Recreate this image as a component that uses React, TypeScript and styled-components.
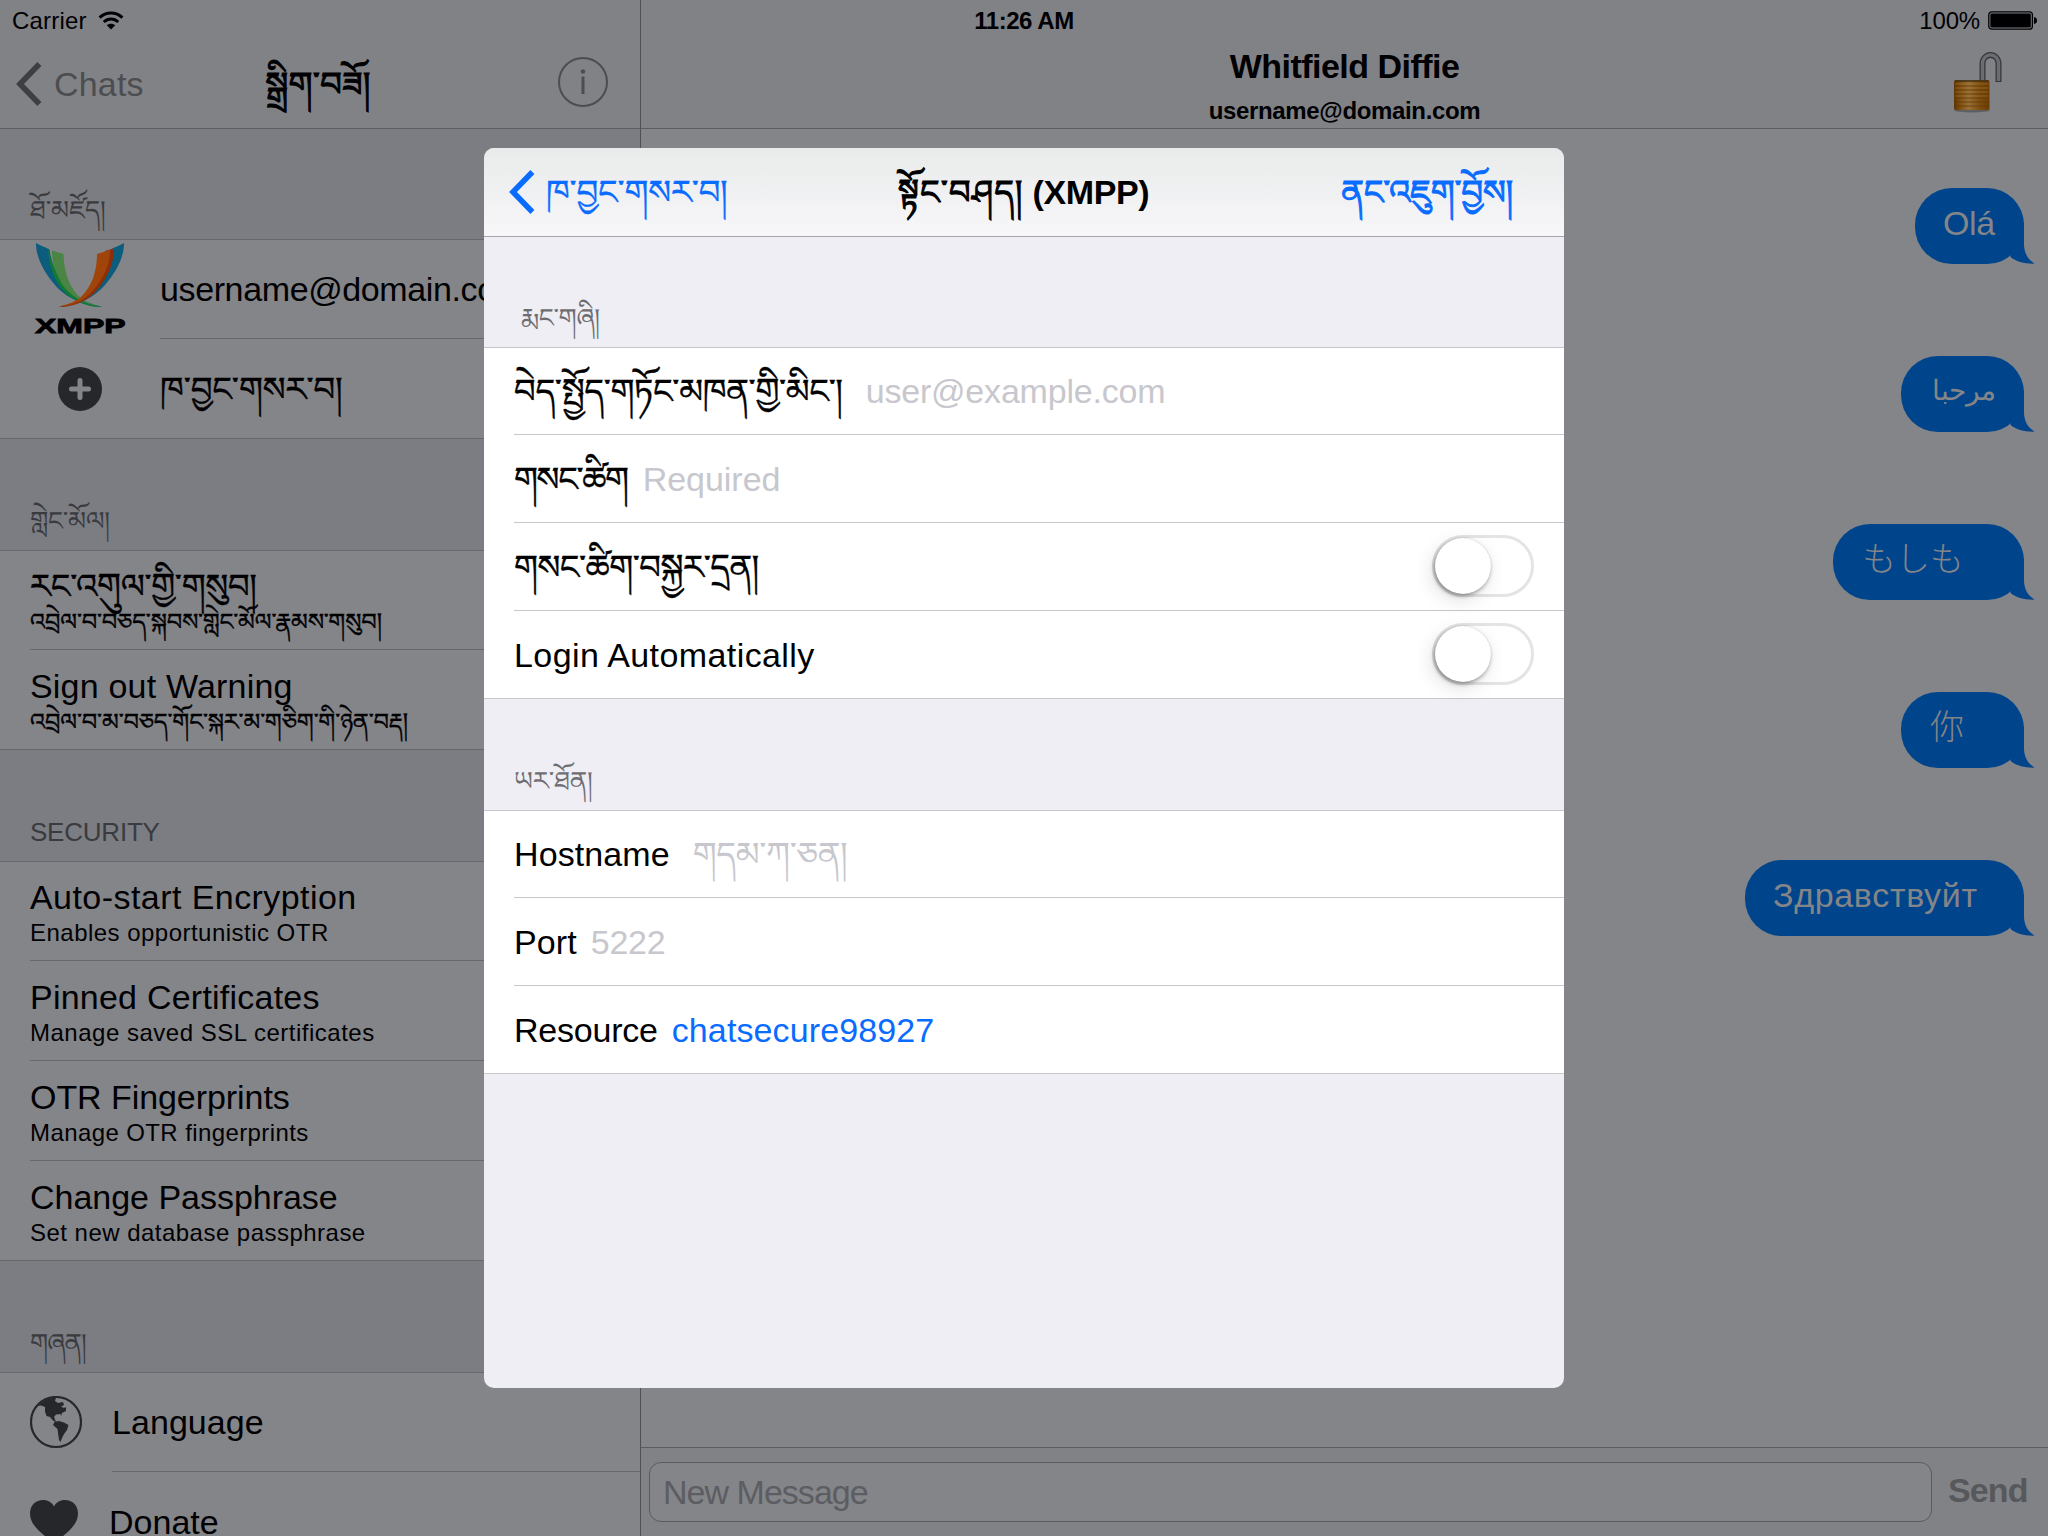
import React, { useLayoutEffect, useRef, useState } from "react";
import styled, { createGlobalStyle } from "styled-components";

const GlobalStyle = createGlobalStyle`
  html, body { margin: 0; padding: 0; }
  body { width: 2048px; height: 1536px; overflow: hidden; background: #848588; }
  *, *::before, *::after { box-sizing: border-box; }
`;

const FONT = `"Liberation Sans", "Noto Sans Tibetan", "Noto Serif Tibetan", "Noto Sans CJK JP", sans-serif`;

/* ---------- text fitted to a given advance width ---------- */

const FitBox = styled.span`
  display: inline-block;
  white-space: pre;

  &:lang(bo) {
    -webkit-text-stroke: 0.4px currentColor;
  }
`;

const SIDE_BEARING = 1.3;

function Fit({ w, lang, children }: { w: number; lang?: string; children: string }) {
  const ref = useRef<HTMLSpanElement>(null);
  const [spacing, setSpacing] = useState(0);
  useLayoutEffect(() => {
    const el = ref.current;
    if (!el) return;
    el.style.letterSpacing = "0px";
    const base = el.getBoundingClientRect().width;
    el.style.letterSpacing = "1px";
    const slope = el.getBoundingClientRect().width - base;
    const next = slope > 0 ? (w - SIDE_BEARING - base) / slope : 0;
    el.style.letterSpacing = `${next}px`;
    setSpacing(next);
  }, [w, children]);
  return (
    <FitBox ref={ref} lang={lang} style={{ letterSpacing: `${spacing}px` }}>
      {children}
    </FitBox>
  );
}

/* ---------- screen ---------- */

const Screen = styled.div`
  position: relative;
  display: flex;
  flex-direction: row;
  width: 2048px;
  height: 1536px;
  overflow: hidden;
  font-family: ${FONT};
  font-size: 34px;
  color: #000003;
  background: #848588;
`;

const Sidebar = styled.aside`
  display: flex;
  flex-direction: column;
  width: 641px;
  border-right: 1px solid #4f5053;
`;

const Chat = styled.main`
  display: flex;
  flex-direction: column;
  flex: 1;
`;

const TopBar = styled.header`
  display: flex;
  flex-direction: column;
  height: 129px;
  background: #818286;
  border-bottom: 1px solid #5c5d61;
`;

const StatusRow = styled.div<{ $end?: boolean }>`
  display: flex;
  align-items: center;
  justify-content: ${(p) => (p.$end ? "flex-end" : "flex-start")};
  gap: ${(p) => (p.$end ? 8 : 11)}px;
  height: 40px;
  padding: 1px 11px 0 12px;
  font-size: 24px;
  line-height: 30px;
`;

const NavRow = styled.div`
  display: grid;
  grid-template-columns: 1fr auto 1fr;
  align-items: center;
  height: 88px;
  padding: 0 32px 0 16px;
  line-height: 40px;
`;

const BackLabel = styled.div`
  display: flex;
  align-items: center;
  gap: 12px;
  color: #4c4d50;
  svg { color: #3e3f42; }
`;

const NavTitle = styled.h1<{ $shift: number }>`
  margin: 0;
  padding-left: ${(p) => p.$shift}px;
  font-size: 34px;
  line-height: 40px;
  font-weight: 700;
  white-space: pre;

  span:lang(bo) {
    font-weight: 400;
    -webkit-text-stroke: 1px currentColor;
  }
`;

const NavEnd = styled.div`
  display: flex;
  justify-content: flex-end;
  align-items: center;
  padding-bottom: 4px;
  color: #4c4d50;
`;

/* ---------- sidebar list ---------- */

const GroupHeader = styled.h2<{ $h: number; $inset?: number; $color?: string }>`
  display: flex;
  align-items: flex-end;
  height: ${(p) => p.$h}px;
  margin: 0;
  padding: 0 0 14px ${(p) => p.$inset ?? 30}px;
  font-size: 26px;
  font-weight: 400;
  line-height: 30px;
  color: ${(p) => p.$color || "#3a3b3f"};
`;

const SideGroups = styled.div`
  flex: 1;
  overflow: hidden;
  background: #7c7d82;
`;

const Group = styled.section`
  background: #848588;
  border-top: 1px solid #67686c;
`;

const SideRow = styled.div<{ $first?: boolean; $last?: boolean }>`
  display: flex;
  height: ${(p) => (p.$first ? 99 : 100)}px;
  ${(p) => (p.$last ? "border-bottom: 1px solid #67686c;" : "")}
`;

const Lead = styled.div<{ $w: number; $pad: number; $top?: boolean }>`
  display: flex;
  align-items: ${(p) => (p.$top ? "flex-start" : "center")};
  flex: none;
  width: ${(p) => p.$w}px;
  padding-left: ${(p) => p.$pad}px;
  padding-top: ${(p) => (p.$top ? 3 : 0)}px;
  color: #26272b;
`;

const RowBody = styled.div<{ $line?: boolean; $two?: boolean }>`
  display: flex;
  flex-direction: column;
  justify-content: center;
  flex: 1;
  padding-top: ${(p) => (p.$two ? 4 : 0)}px;
  line-height: 40px;
  white-space: nowrap;
  ${(p) => (p.$line ? "border-bottom: 1px solid #67686c;" : "")}
`;

const Subtitle = styled.div`
  font-size: 24px;
  line-height: 32px;
`;

/* ---------- chat ---------- */

const ChatTitle = styled.div`
  display: grid;
  grid-template-columns: 1fr auto 1fr;
  height: 88px;
  padding-right: 43px;
  font-weight: 700;
`;

const ChatNames = styled.div`
  display: flex;
  flex-direction: column;
  align-items: center;
  padding-left: 43px;
  padding-top: 6px;
  line-height: 40px;
`;

const ChatUser = styled.div`
  font-size: 24px;
  line-height: 30px;
  padding-top: 10px;
`;

const LockSlot = styled.div`
  display: flex;
  justify-content: flex-end;
  padding: 11px 3px 0 0;
`;

const Messages = styled.div`
  display: flex;
  flex-direction: column;
  align-items: flex-end;
  gap: 92px;
  flex: 1;
  padding: 59px 24px 0 0;
`;

const Bubble = styled.div<{ $w: number; $pad: number }>`
  position: relative;
  width: ${(p) => p.$w}px;
  height: 76px;
  padding: 15px 0 0 ${(p) => p.$pad}px;
  border-radius: 37px;
  background: #00448b;
  color: #848588;
  line-height: 40px;
  white-space: nowrap;

  &:lang(ja), &:lang(zh) {
    font-weight: 300;
  }
`;

const ArabicText = styled.span`
  display: block;
  width: 64px;
  font-size: 28px;
`;

const Tail = styled.svg`
  position: absolute;
  right: -11px;
  bottom: 0;
  display: block;
`;

const Composer = styled.div`
  display: flex;
  align-items: flex-start;
  height: 89px;
  padding: 14px 0 0 8px;
  border-top: 1px solid #5c5d61;
  background: #818286;
`;

const Input = styled.div`
  display: flex;
  align-items: center;
  width: 1283px;
  height: 60px;
  padding-left: 13px;
  border: 1px solid #5a5b5f;
  border-radius: 12px;
  background: #848588;
  color: #5c5d62;
  line-height: 40px;
`;

const Send = styled.div`
  padding: 8px 0 0 16px;
  line-height: 40px;
  font-weight: 700;
  color: #57585b;
`;

/* ---------- modal ---------- */

const Clock = styled.div`
  position: absolute;
  top: 6px;
  left: 0;
  width: 2048px;
  text-align: center;
  font-size: 24px;
  line-height: 30px;
  font-weight: 700;
`;

const Modal = styled.div`
  position: absolute;
  left: 484px;
  top: 148px;
  display: flex;
  flex-direction: column;
  width: 1080px;
  height: 1240px;
  border-radius: 10px;
  overflow: hidden;
  background: #efeef4;
  color: #000;
`;

const ModalNav = styled.header`
  display: grid;
  grid-template-columns: 1fr auto 1fr;
  align-items: center;
  height: 89px;
  padding: 0 51px 0 25px;
  background: linear-gradient(#e9eaea, #f7f7f9);
  border-bottom: 1px solid #a5a6a9;
  line-height: 40px;
`;

const ModalLink = styled.div<{ $end?: boolean }>`
  display: flex;
  align-items: center;
  justify-content: ${(p) => (p.$end ? "flex-end" : "flex-start")};
  gap: 11px;
  color: #0a6cff;

  span:lang(bo) {
    -webkit-text-stroke: ${(p) => (p.$end ? 1 : 0.3)}px currentColor;
  }
`;

const Card = styled.section`
  padding-left: 30px;
  background: #fff;
  border-top: 1px solid #c8c7cc;
  border-bottom: 1px solid #c8c7cc;
`;

const Field = styled.div<{ $edge?: boolean; $last?: boolean; $gap?: number }>`
  display: flex;
  align-items: center;
  gap: ${(p) => p.$gap ?? 15}px;
  height: ${(p) => (p.$edge || p.$last ? 87 : 88)}px;
  padding-right: 30px;
  line-height: 40px;
  white-space: nowrap;
  ${(p) => (p.$last ? "" : "border-bottom: 1px solid #c8c7cc;")}
`;

const Placeholder = styled.span`
  color: #c7c7cd;
`;

const Value = styled.span`
  color: #0a6cff;
`;

const Spacer = styled.span`
  flex: 1;
`;

const Track = styled.span`
  width: 102px;
  height: 62px;
  margin-bottom: 1px;
  border: 3px solid #e4e4e4;
  border-radius: 31px;
`;

const Knob = styled.span`
  display: block;
  width: 56px;
  height: 56px;
  border-radius: 50%;
  background: #fff;
  box-shadow: 0 0 1px rgba(0, 0, 0, 0.18), -1px 2px 4px rgba(0, 0, 0, 0.36), -3px 6px 20px rgba(0, 0, 0, 0.12);
`;

/* ---------- drawings ---------- */

const Wifi = () => (
  <svg width="26" height="19" viewBox="0 0 26 19" fill="none" stroke="currentColor">
    <path d="M1.6 6.6C8 .4 18 .4 24.4 6.6" strokeWidth="3" />
    <path d="M5.8 11C10 7 16 7 20.2 11" strokeWidth="3" />
    <path d="M13 18.5L8.8 14.2C11.2 12.2 14.8 12.2 17.2 14.2Z" fill="currentColor" stroke="none" />
  </svg>
);

const Chevron = () => (
  <svg width="26" height="44" viewBox="0 0 26 44" fill="none" stroke="currentColor" strokeWidth="5.6">
    <path d="M23.4 2L4 22L23.4 42" />
  </svg>
);

const Info = () => (
  <svg width="50" height="50" viewBox="0 0 50 50" fill="none" stroke="currentColor">
    <circle cx="25" cy="25" r="24" strokeWidth="2" />
    <path d="M25 19.5V37" strokeWidth="3" />
    <circle cx="25" cy="14.5" r="2.2" fill="currentColor" stroke="none" />
  </svg>
);

const Battery = () => (
  <svg width="49" height="20" viewBox="0 0 49 20">
    <rect x="0.8" y="0.8" width="43.6" height="17.4" rx="3" fill="none" stroke="#000003" strokeWidth="1.3" />
    <rect x="2.4" y="2.4" width="40.4" height="14.2" rx="1.4" fill="#000003" />
    <path d="M46 6c2 .3 3 1.500 3 3.500s-1 3.200-3 3.500z" fill="#000003" />
  </svg>
);

const Lock = () => (
  <svg width="50" height="62" viewBox="0 0 50 62">
    <defs>
      <linearGradient id="brass" x1="0" x2="1">
        <stop offset="0" stopColor="#5e3505" />
        <stop offset=".15" stopColor="#7d4c0c" />
        <stop offset=".42" stopColor="#997038" />
        <stop offset=".7" stopColor="#7f500f" />
        <stop offset="1" stopColor="#6c3d04" />
      </linearGradient>
    </defs>
    <ellipse cx="20" cy="59" rx="18" ry="2.500" fill="#5e5f62" />
    <path d="M30.500 32V12.500a8 8.600 0 0 1 16 0V31" fill="none" stroke="#37383d" strokeWidth="6" />
    <path d="M30.500 32V12.500a8 8.600 0 0 1 16 0V30" fill="none" stroke="#6c6d72" strokeWidth="3.400" />
    <rect x="2" y="29" width="35.500" height="30" rx="2" fill="url(#brass)" />
    <path d="M3 30h33.500" stroke="#3e3118" strokeWidth="1.500" />
    <path d="M3 35h33.500M3 39h33.500M3 43h33.500M3 47h33.500M3 51h33.500M3 55h33.500" stroke="#61380a" strokeWidth="1.200" opacity=".75" />
    <path d="M3 33h33.500M3 37h33.500M3 41h33.500M3 45h33.500" stroke="#a87a2c" strokeWidth="1" opacity=".45" />
  </svg>
);

const LogoBox = styled.div`
  display: flex;
  flex-direction: column;
  align-items: center;
  gap: 6px;
  width: 92px;
`;

const LogoWord = styled.div`
  height: 22px;
  font-size: 20px;
  line-height: 22px;
  font-weight: 700;
  color: #000003;
  transform: scaleX(1.6);
  -webkit-text-stroke: 0.8px #000003;
`;

const XmppLogo = () => (
  <LogoBox>
    <svg width="90" height="66" viewBox="0 0 90 66">
      <path d="M1 0C6 3 12 5 14.500 6.500C17 28 30 46 45 56C50 59 58 61 67 64C50 64 30 54 20 42C8 28 1 14 1 0Z" fill="#0b5c7d" />
      <path d="M13.500 6C18 30 30 48 44 57C50 60.500 59 62 67 64C52 65 34 56 26 45C18 34 13 20 13.500 6Z" fill="#117a33" />
      <path d="M17 7.500L28.500 11C29 32 36 47 46 55C52 60 60 62 65 63.500C48 61 34 52 27 41C20 29 17 20 17 7.500Z" fill="#4a8545" />
      <path d="M89 0C84 3 78 5 75.500 6.500C73 28 60 46 48 56C42 60 34 61 24 64C42 63 60 54 70 42C82 28 89 14 89 0Z" fill="#0b5c7d" />
      <path d="M79 5.500L70 8C69 30 58 46 47 56C41 60 32 61.500 24 64C40 64 54 57 63 46C73 34 79 20 79 5.500Z" fill="#8c2f0a" />
      <path d="M75 7L62 11C62 30 56 44 46 54C40 59 32 61.500 24 63.500C40 63 52 56 60 45C70 33 75 20 75 7Z" fill="#a1440a" />
    </svg>
    <LogoWord>XMPP</LogoWord>
  </LogoBox>
);

const PlusCircle = () => (
  <svg width="44" height="44" viewBox="0 0 44 44">
    <circle cx="22" cy="22" r="22" fill="#26272b" />
    <path d="M22 13.500V30.500M13.500 22H30.500" stroke="#848588" strokeWidth="5" strokeLinecap="round" />
  </svg>
);

const Globe = () => (
  <svg width="52" height="54" viewBox="0 0 52 54" fill="#26272b">
    <circle cx="26" cy="26" r="25" fill="none" stroke="#26272b" strokeWidth="2.200" />
    <path d="M8 10C13 4 20 1.500 26 1.500L25 5L28 7L33 6L34 9L31 10.500L34 12L36 11L36 15L32 17L31 20L30.500 18L26 18.500L24 21L25 23L24 25L20 21L16.500 20L15 15.500L15 11L11 9.500Z" />
    <path d="M20 21.500L25 24L27 26L24.500 25.500Z" />
    <path d="M24.500 26L29 25L34 26.500L38.500 29L37 34L34 38L32 42L30.500 46L29 44L28 37L27.500 33L23 29Z" />
  </svg>
);

const Heart = () => (
  <svg width="48" height="44" viewBox="0 0 48 44" fill="#26272b">
    <path d="M24 44C18 37 0 28 0 13.500C0 5 6 0 13 0C18 0 22 2.500 24 6.500C26 2.500 30 0 35 0C42 0 48 5 48 13.500C48 28 30 37 24 44Z" />
  </svg>
);

/* ---------- data ---------- */

type Detail = { title: string; tw: number; sub: string; sw: number; titleLang?: string; subLang?: string };

const conversation: Detail[] = [
  { title: "རང་འགུལ་གྱི་གསུབ།", tw: 228, titleLang: "bo", sub: "འབྲེལ་བ་བཅད་སྐབས་གླེང་མོལ་རྣམས་གསུབ།", sw: 353, subLang: "bo" },
  { title: "Sign out Warning", tw: 264, sub: "འབྲེལ་བ་མ་བཅད་གོང་སྐར་མ་གཅིག་གི་ཉེན་བརྡ།", sw: 379, subLang: "bo" },
];

const security: Detail[] = [
  { title: "Auto-start Encryption", tw: 328, sub: "Enables opportunistic OTR", sw: 300 },
  { title: "Pinned Certificates", tw: 291, sub: "Manage saved SSL certificates", sw: 346 },
  { title: "OTR Fingerprints", tw: 261, sub: "Manage OTR fingerprints", sw: 280 },
  { title: "Change Passphrase", tw: 309, sub: "Set new database passphrase", sw: 337 },
];

const messages = [
  { text: "Olá", w: 109, pad: 28, tw: 53, lang: "pt" },
  { text: "مرحبا", w: 123, pad: 31, tw: 64, lang: "ar" },
  { text: "もしも", w: 191, pad: 29, tw: 103, lang: "ja" },
  { text: "你", w: 123, pad: 29, tw: 34, lang: "zh" },
  { text: "Здравствуйт", w: 279, pad: 28, tw: 206, lang: "ru" },
];

function DetailRows({ items }: { items: Detail[] }) {
  return (
    <>
      {items.map((it, i) => (
        <SideRow key={it.title} $first={i === 0} $last={i === items.length - 1}>
          <Lead $w={30} $pad={0} />
          <RowBody $two $line={i < items.length - 1}>
            <div><Fit w={it.tw} lang={it.titleLang}>{it.title}</Fit></div>
            <Subtitle><Fit w={it.sw} lang={it.subLang}>{it.sub}</Fit></Subtitle>
          </RowBody>
        </SideRow>
      ))}
    </>
  );
}

export default function App() {
  return (
    <>
      <GlobalStyle />
      <Screen>
        <Sidebar>
          <TopBar>
            <StatusRow>
              <Fit w={76}>Carrier</Fit>
              <Wifi />
            </StatusRow>
            <NavRow>
              <BackLabel>
                <Chevron />
                <Fit w={91}>Chats</Fit>
              </BackLabel>
              <NavTitle $shift={12}><Fit lang="bo" w={107}>སྒྲིག་བཟོ།</Fit></NavTitle>
              <NavEnd><Info /></NavEnd>
            </NavRow>
          </TopBar>
          <SideGroups>
            <GroupHeader $h={110}><Fit w={77}>ཐོ་མཛོད།</Fit></GroupHeader>
            <Group>
              <SideRow $first>
                <Lead $w={160} $pad={34} $top><XmppLogo /></Lead>
                <RowBody $line><div><Fit w={365}>username@domain.com</Fit></div></RowBody>
              </SideRow>
              <SideRow $last>
                <Lead $w={160} $pad={58}><PlusCircle /></Lead>
                <RowBody><div><Fit lang="bo" w={184}>ཁ་བྱང་གསར་བ།</Fit></div></RowBody>
              </SideRow>
            </Group>
            <GroupHeader $h={111}><Fit w={81}>གླེང་མོལ།</Fit></GroupHeader>
            <Group><DetailRows items={conversation} /></Group>
            <GroupHeader $h={111}><Fit w={131}>SECURITY</Fit></GroupHeader>
            <Group><DetailRows items={security} /></Group>
            <GroupHeader $h={111}><Fit w={57}>གཞན།</Fit></GroupHeader>
            <Group>
              <SideRow $first>
                <Lead $w={112} $pad={30}><Globe /></Lead>
                <RowBody $line><div><Fit w={153}>Language</Fit></div></RowBody>
              </SideRow>
              <SideRow>
                <Lead $w={109} $pad={30}><Heart /></Lead>
                <RowBody><div><Fit w={111}>Donate</Fit></div></RowBody>
              </SideRow>
            </Group>
          </SideGroups>
        </Sidebar>

        <Chat>
          <TopBar>
            <StatusRow $end>
              <Fit w={62}>100%</Fit>
              <Battery />
            </StatusRow>
            <ChatTitle>
              <span />
              <ChatNames>
                <Fit w={231}>Whitfield Diffie</Fit>
                <ChatUser><Fit w={273}>username@domain.com</Fit></ChatUser>
              </ChatNames>
              <LockSlot><Lock /></LockSlot>
            </ChatTitle>
          </TopBar>
          <Messages>
            {messages.map((m) => (
              <Bubble key={m.text} $w={m.w} $pad={m.pad} lang={m.lang}>
                {m.lang === "ar" ? <ArabicText>{m.text}</ArabicText> : <Fit w={m.tw}>{m.text}</Fit>}
                <Tail width="30" height="42" viewBox="0 0 30 42" fill="#00448b">
                  <path d="M6 0H19V22C19 31 23 38 29.800 41.600C20 42 11 39.500 5.500 35Z" />
                </Tail>
              </Bubble>
            ))}
          </Messages>
          <Composer>
            <Input><Fit w={206}>New Message</Fit></Input>
            <Send><Fit w={81}>Send</Fit></Send>
          </Composer>
        </Chat>

        <Clock><Fit w={101}>11:26 AM</Fit></Clock>

        <Modal role="dialog">
          <ModalNav>
            <ModalLink>
              <Chevron />
              <Fit lang="bo" w={183}>ཁ་བྱང་གསར་བ།</Fit>
            </ModalLink>
            <NavTitle $shift={25}><Fit lang="bo" w={127}>སྟོང་བཤད།</Fit><Fit w={127}> (XMPP)</Fit></NavTitle>
            <ModalLink $end><Fit lang="bo" w={173}>ནང་འཇུག་བྱོས།</Fit></ModalLink>
          </ModalNav>
          <GroupHeader $h={110} $inset={37} $color="#6d6d72"><Fit w={80}>རྨང་གཞི།</Fit></GroupHeader>
          <Card>
            <Field $edge $gap={23}>
              <Fit lang="bo" w={330}>བེད་སྤྱོད་གཏོང་མཁན་གྱི་མིང་།</Fit>
              <Placeholder><Fit w={301}>user@example.com</Fit></Placeholder>
            </Field>
            <Field>
              <Fit lang="bo" w={115}>གསང་ཚིག</Fit>
              <Placeholder><Fit w={139}>Required</Fit></Placeholder>
            </Field>
            <Field>
              <Fit lang="bo" w={246}>གསང་ཚིག་བསྐྱར་དྲན།</Fit>
              <Spacer />
              <Track><Knob /></Track>
            </Field>
            <Field $last>
              <Fit w={302}>Login Automatically</Fit>
              <Spacer />
              <Track><Knob /></Track>
            </Field>
          </Card>
          <GroupHeader $h={111} $color="#6d6d72"><Fit w={80}>ཡར་ཐོན།</Fit></GroupHeader>
          <Card>
            <Field $edge $gap={23}>
              <Fit w={157}>Hostname</Fit>
              <Placeholder><Fit w={156}>གདམ་ཀ་ཅན།</Fit></Placeholder>
            </Field>
            <Field $gap={14}>
              <Fit w={64}>Port</Fit>
              <Placeholder><Fit w={76}>5222</Fit></Placeholder>
            </Field>
            <Field $last $gap={14}>
              <Fit w={145}>Resource</Fit>
              <Value><Fit w={264}>chatsecure98927</Fit></Value>
            </Field>
          </Card>
        </Modal>
      </Screen>
    </>
  );
}
